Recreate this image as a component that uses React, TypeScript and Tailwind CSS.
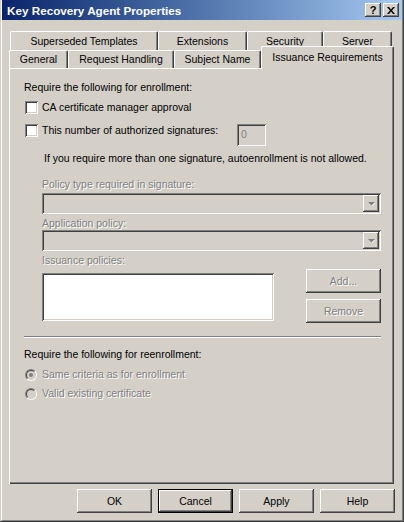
import React from "react";

const raised =
  "bg-[#d4d0c8] shadow-[inset_-1px_-1px_0_#404040,inset_1px_1px_0_#ffffff,inset_-2px_-2px_0_#808080]";
const sunken =
  "shadow-[inset_1px_1px_0_#808080,inset_-1px_-1px_0_#ffffff,inset_2px_2px_0_#404040,inset_-2px_-2px_0_#d4d0c8]";
const disabledText = "text-[#808080] [text-shadow:1px_1px_0_#ffffff]";

const Tab = ({ label, w, selected }: { label: string; w: number; selected?: boolean }) => (
  <div
    style={{ width: w }}
    className={
      "flex items-center justify-center bg-[#d4d0c8] border-t border-l border-white rounded-tl-[2px] rounded-tr-[2px] border-r border-r-[#404040] shadow-[inset_-1px_0_0_#808080] " +
      (selected ? "relative z-10 h-[23px] -mb-px pb-[2px]" : "h-full")
    }
  >
    {label}
  </div>
);

const Checkbox = () => <div className={"w-[13px] h-[13px] bg-white shrink-0 " + sunken} />;

const Radio = ({ checked }: { checked?: boolean }) => (
  <div className="w-[12px] h-[12px] rounded-full border border-t-[#808080] border-l-[#808080] border-r-white border-b-white shrink-0">
    <div className="w-full h-full rounded-full border border-t-[#404040] border-l-[#404040] border-r-[#d4d0c8] border-b-[#d4d0c8] bg-[#d4d0c8] flex items-center justify-center">
      {checked && <div className="w-[4px] h-[4px] rounded-full bg-[#808080]" />}
    </div>
  </div>
);

const Combo = () => (
  <div className={"ml-[33px] w-[339px] h-[21px] bg-[#d4d0c8] flex justify-end p-[2px] " + sunken}>
    <div className={"w-[16px] h-full flex items-center justify-center " + raised}>
      <svg width="9" height="6" viewBox="0 0 9 6">
        <path d="M2 1h5L4.5 4z" fill="#ffffff" transform="translate(1 1)" />
        <path d="M1 1h7L4.5 4.5z" fill="#808080" />
      </svg>
    </div>
  </div>
);

const Button = ({ label, disabled, def }: { label: string; disabled?: boolean; def?: boolean }) => (
  <div
    className={
      "w-[75px] h-[24px] flex items-center justify-center " +
      (def
        ? "bg-[#d4d0c8] border border-black shadow-[inset_-1px_-1px_0_#404040,inset_1px_1px_0_#ffffff,inset_-2px_-2px_0_#808080]"
        : raised) +
      (disabled ? " " + disabledText : "")
    }
  >
    {label}
  </div>
);

export default function App() {
  return (
    <div
      className="w-[404px] h-[522px] bg-[#d4d0c8] border-r border-b border-[#404040] text-[10.5px] leading-[13px] text-black select-none"
      style={{ fontFamily: '"Liberation Sans", Arial, sans-serif' }}
    >
      <div className="h-full border-l border-l-white border-r border-b border-[#808080] ml-px flex flex-col">
        {/* title bar */}
        <div className="h-[20px] shrink-0 bg-linear-to-r from-[#0a246a] to-[#a6caf0] flex items-center pl-[5px] pr-[3px]">
          <span className="text-white font-bold text-[11.7px]">Key Recovery Agent Properties</span>
          <div className="ml-auto flex gap-[2px]">
            <div className={"w-[16px] h-[14px] flex items-center justify-center font-bold text-[11px] " + raised}>?</div>
            <div className={"w-[16px] h-[14px] flex items-center justify-center " + raised}>
              <svg width="8" height="7" viewBox="0 0 8 7">
                <path d="M0 0h2l2 2.5L6 0h2L5 3.5 8 7H6L4 4.5 2 7H0l3-3.5z" fill="#000" />
              </svg>
            </div>
          </div>
        </div>

        {/* tabs */}
        <div className="pl-[7px] mt-[11px]">
          <div className="flex h-[19px] ml-px">
            <Tab label="Superseded Templates" w={148} />
            <Tab label="Extensions" w={89} />
            <Tab label="Security" w={76} />
            <Tab label="Server" w={69} />
          </div>
          <div className="flex h-[18px] items-end">
            <Tab label="General" w={59} />
            <Tab label="Request Handling" w={106} />
            <Tab label="Subject Name" w={87} />
            <Tab label="Issuance Requirements" w={133} selected />
          </div>

          {/* panel */}
          <div className="w-[385px] h-[416px] flex flex-col shadow-[inset_1px_1px_0_#ffffff,inset_-1px_-1px_0_#404040,inset_-2px_-2px_0_#808080]">
            <div className="mt-[13px] pl-[15px]">Require the following for enrollment:</div>
            <div className="mt-[7px] pl-[16px] flex items-center h-[13px]">
              <Checkbox />
              <span className="ml-[4px]">CA certificate manager approval</span>
            </div>
            <div className="mt-[10px] pl-[16px] flex h-[22px]">
              <Checkbox />
              <span className="ml-[4px]">This number of authorized signatures:</span>
              <div className={"ml-auto mr-[128px] w-[29px] h-[22px] bg-[#d4d0c8] pl-[4px] pt-[4px] text-[#808080] " + sunken}>0</div>
            </div>
            <div className="mt-[6px] pl-[35px]">
              If you require more than one signature, autoenrollment is not allowed.
            </div>
            <div className={"mt-[13px] pl-[33px] " + disabledText}>Policy type required in signature:</div>
            <div className="mt-[2px]">
              <Combo />
            </div>
            <div className={"mt-[3px] pl-[33px] " + disabledText}>Application policy:</div>
            <Combo />
            <div className={"mt-[3px] pl-[33px] " + disabledText}>Issuance policies:</div>
            <div className="mt-[2px] flex">
              <div className={"ml-[33px] mt-[4px] w-[232px] h-[48px] bg-white " + sunken} />
              <div className="ml-[32px] flex flex-col gap-[6px]">
                <Button label="Add..." disabled />
                <Button label="Remove" disabled />
              </div>
            </div>
            <div className="mt-[13px] ml-[15px] w-[357px] border-t border-t-[#808080] border-b border-b-white" />
            <div className="mt-[10px] pl-[15px]">Require the following for reenrollment:</div>
            <div className="mt-[7px] pl-[16px] flex items-center h-[13px]">
              <Radio checked />
              <span className={"ml-[5px] " + disabledText}>Same criteria as for enrollment</span>
            </div>
            <div className="mt-[6px] pl-[16px] flex items-center h-[13px]">
              <Radio />
              <span className={"ml-[5px] " + disabledText}>Valid existing certificate</span>
            </div>
          </div>

          {/* buttons */}
          <div className="mt-[5px] flex gap-[6px] pl-[68px]">
            <Button label="OK" />
            <Button label="Cancel" def />
            <Button label="Apply" />
            <Button label="Help" />
          </div>
        </div>
      </div>
    </div>
  );
}
